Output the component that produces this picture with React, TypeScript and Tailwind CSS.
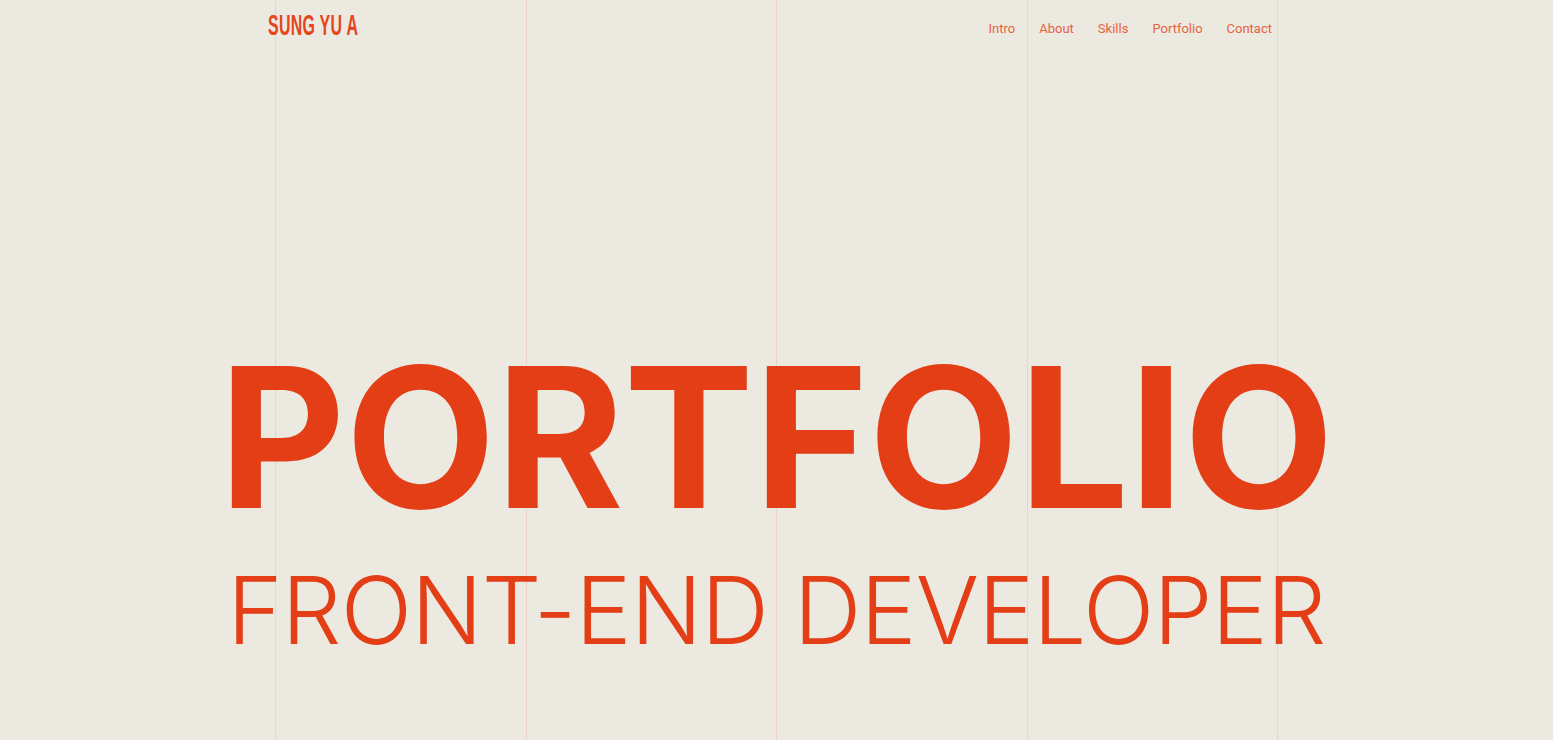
import React from 'react';

const navItems = ['Intro', 'About', 'Skills', 'Portfolio', 'Contact'];

const GridLines = () => (
  <div className="pointer-events-none absolute inset-0 flex justify-center">
    <div className="flex h-full w-[1003px] border-r border-[#ecd3c8]">
      {[0, 1, 2, 3].map((i) => (
        <div key={i} className="h-full flex-1 border-l border-[#ecd3c8]" />
      ))}
    </div>
  </div>
);

const App = () => {
  return (
    <div className="relative min-h-screen overflow-hidden bg-[#ece9e1] text-[#e33e16]">
      <GridLines />

      {/* header */}
      <header className="relative mx-auto flex h-[56px] w-[1003px] items-start justify-between">
        <a
          href="#"
          className="-ml-[7px] mt-[8px] inline-block origin-left scale-x-[0.55] font-['Liberation_Sans_Narrow','Liberation_Sans',sans-serif] text-[29px] font-bold leading-[34px] tracking-[0.5px] text-[#e5461c]"
        >
          SUNG YU A
        </a>
        <nav className="mr-[6px] mt-[20px] flex gap-[24px] font-['Roboto',sans-serif] text-[13px] leading-[18px] text-[#e8623e]">
          {navItems.map((item) => (
            <a key={item} href="#">
              {item}
            </a>
          ))}
        </nav>
      </header>

      {/* hero */}
      <section className="relative flex flex-col items-center pt-[284px] font-['Inter',sans-serif]">
        <h1 className="text-[195px] font-bold leading-[195px] text-[#e33e16]">PORTFOLIO</h1>
        <p className="mt-[28px] text-[94px] font-light leading-[94px] tracking-[-0.8px] text-[#e33e16]">
          FRONT-END DEVELOPER
        </p>
      </section>
    </div>
  );
};

export default App;
